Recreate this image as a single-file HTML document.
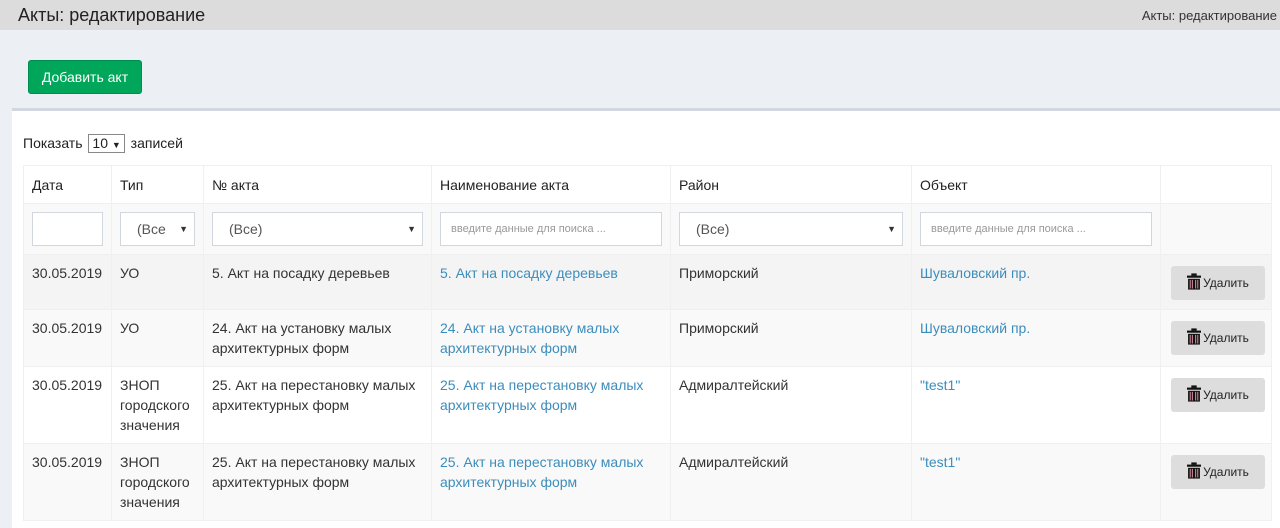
<!DOCTYPE html>
<html><head><meta charset="utf-8"><style>
*{box-sizing:border-box}
body{margin:0;width:1280px;height:517px;overflow:hidden;background:#ecf0f5;font-family:"Liberation Sans",sans-serif;font-size:14px;color:#333}
.hdr{height:30px;background:#dcdcdc;position:relative}
.hdr h1{margin:0;position:absolute;left:18px;top:5px;font-size:18px;font-weight:normal;color:#222}
.hdr .bc{position:absolute;right:3px;top:8px;font-size:13px;color:#333}
.btn{position:absolute;left:28px;top:60px;width:114px;height:34px;background:#00a65a;border:1px solid #008d4c;border-radius:3px;color:#fff;font-size:14px;line-height:32px;text-align:center}
.box{position:absolute;left:12px;top:108px;width:1268px;height:420px;background:#fff;border-top:3px solid #d2d6de}
.len{position:absolute;left:11px;top:23px;font-size:14px;color:#222}
.len span.s{display:inline-block;border:1px solid #888;padding:0 3px;height:19px;line-height:17px;margin:0 2px}
table{position:absolute;left:11px;top:54px;border-collapse:collapse;table-layout:fixed;width:1248px}
td,th{border:1px solid #f0f0f0;padding:8px 8px;vertical-align:top;text-align:left;line-height:20px}
th{font-weight:normal;height:38px;padding-top:9px;color:#222}
tr.f td{background:#f9f9f9;height:51px;padding:8px}
.in{height:34px;border:1px solid #d2d6de;background:#fff;font-size:11px;color:#999;padding:0 10px;line-height:32px;position:relative}
.sel{font-size:14px;color:#555;padding-left:16px}
.sel:after{content:"▼";position:absolute;right:6px;top:0;font-size:9px;color:#333}
a{color:#3c8dbc;text-decoration:none}
.del{float:right;width:94px;height:34px;background:#ddd;border-radius:3px;margin-top:3px;margin-right:-2px;font-size:12px;color:#222;line-height:34px;text-align:center}
.del svg{vertical-align:-3px;margin-right:2px}
</style></head><body>
<div class="hdr"><h1>Акты: редактирование</h1><div class="bc">Акты: редактирование</div></div>
<div class="btn">Добавить акт</div>
<div class="box">
<div class="len">Показать <span class="s">10 <span style="font-size:9px">▼</span></span> записей</div>
<table>
<colgroup><col style="width:88px"><col style="width:92px"><col style="width:228px"><col style="width:239px"><col style="width:241px"><col style="width:249px"><col style="width:111px"></colgroup>
<tr><th>Дата</th><th>Тип</th><th>№ акта</th><th>Наименование акта</th><th>Район</th><th>Объект</th><th></th></tr>
<tr class="f"><td><div class="in"></div></td><td><div class="in sel">(Все</div></td><td><div class="in sel">(Все)</div></td><td><div class="in">введите данные для поиска ...</div></td><td><div class="in sel">(Все)</div></td><td><div class="in">введите данные для поиска ...</div></td><td></td></tr>
<tr style="background:#f4f4f4;height:55px"><td>30.05.2019</td><td>УО</td><td>5. Акт на посадку деревьев</td><td><a>5. Акт на посадку деревьев</a></td><td>Приморский</td><td><a>Шуваловский пр.</a></td><td><div class="del"><svg width="14" height="17" viewBox="0 0 13 15"><rect x="0" y="2" width="13" height="2" fill="#111"/><rect x="4" y="0" width="5" height="2" fill="#111"/><path d="M1 5h11v10H1z" fill="#111"/><path d="M3 6v8M5 6v8M8 6v8M10 6v8" stroke="#c89" stroke-width="1"/></svg>Удалить</div></td></tr>
<tr style="background:#f9f9f9;height:57px"><td>30.05.2019</td><td>УО</td><td>24. Акт на установку малых архитектурных форм</td><td><a>24. Акт на установку малых архитектурных форм</a></td><td>Приморский</td><td><a>Шуваловский пр.</a></td><td><div class="del"><svg width="14" height="17" viewBox="0 0 13 15"><rect x="0" y="2" width="13" height="2" fill="#111"/><rect x="4" y="0" width="5" height="2" fill="#111"/><path d="M1 5h11v10H1z" fill="#111"/><path d="M3 6v8M5 6v8M8 6v8M10 6v8" stroke="#c89" stroke-width="1"/></svg>Удалить</div></td></tr>
<tr style="background:#fff;height:77px"><td>30.05.2019</td><td>ЗНОП городского значения</td><td>25. Акт на перестановку малых архитектурных форм</td><td><a>25. Акт на перестановку малых архитектурных форм</a></td><td>Адмиралтейский</td><td><a>"test1"</a></td><td><div class="del"><svg width="14" height="17" viewBox="0 0 13 15"><rect x="0" y="2" width="13" height="2" fill="#111"/><rect x="4" y="0" width="5" height="2" fill="#111"/><path d="M1 5h11v10H1z" fill="#111"/><path d="M3 6v8M5 6v8M8 6v8M10 6v8" stroke="#c89" stroke-width="1"/></svg>Удалить</div></td></tr>
<tr style="background:#f9f9f9;height:77px"><td>30.05.2019</td><td>ЗНОП городского значения</td><td>25. Акт на перестановку малых архитектурных форм</td><td><a>25. Акт на перестановку малых архитектурных форм</a></td><td>Адмиралтейский</td><td><a>"test1"</a></td><td><div class="del"><svg width="14" height="17" viewBox="0 0 13 15"><rect x="0" y="2" width="13" height="2" fill="#111"/><rect x="4" y="0" width="5" height="2" fill="#111"/><path d="M1 5h11v10H1z" fill="#111"/><path d="M3 6v8M5 6v8M8 6v8M10 6v8" stroke="#c89" stroke-width="1"/></svg>Удалить</div></td></tr>
</table>
</div>
</body></html>
